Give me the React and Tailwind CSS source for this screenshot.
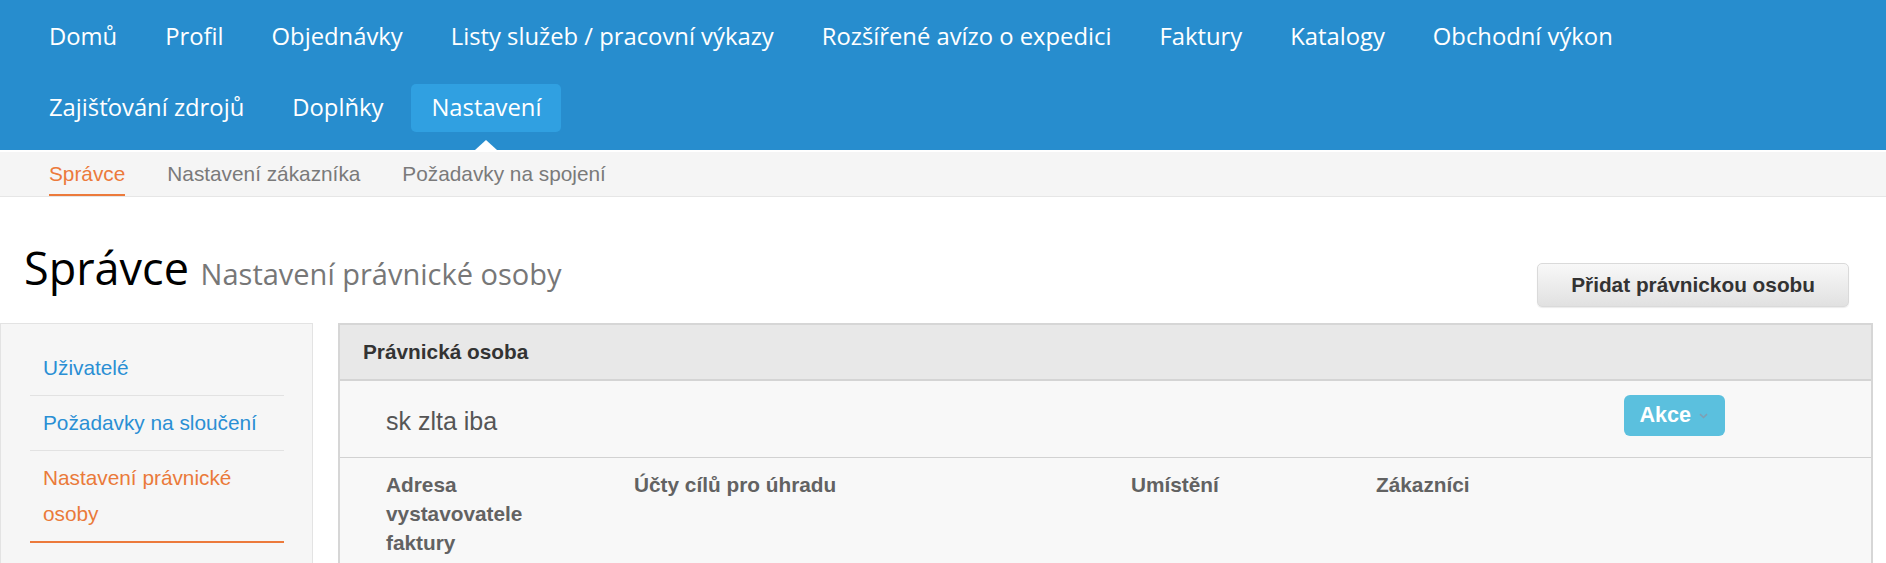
import React from "react";

const mainRow1 = [
  "Domů",
  "Profil",
  "Objednávky",
  "Listy služeb / pracovní výkazy",
  "Rozšířené avízo o expedici",
  "Faktury",
  "Katalogy",
  "Obchodní výkon",
];
const mainRow2 = ["Zajišťování zdrojů", "Doplňky", "Nastavení"];

const subTabs = ["Správce", "Nastavení zákazníka", "Požadavky na spojení"];

const sideLinks = [
  { label: "Uživatelé", active: false },
  { label: "Požadavky na sloučení", active: false },
  { label: "Nastavení právnické osoby", active: true },
];

function NavRow({ items, active }) {
  return (
    <ul className="flex gap-2">
      {items.map((item) => (
        <li key={item}>
          <a
            className={
              "relative h-[48px] px-5 flex items-center rounded-[5px] text-[23.8px] text-white whitespace-nowrap " +
              (item === active ? "bg-[#30a0e1]" : "")
            }
          >
            {item}
            {item === active && (
              <span className="absolute left-1/2 -translate-x-1/2 top-full mt-[8px] w-0 h-0 border-x-[11px] border-x-transparent border-b-[10px] border-b-white" />
            )}
          </a>
        </li>
      ))}
    </ul>
  );
}

function App() {
  return (
    <div className="min-h-screen bg-white font-['Liberation_Sans',Arial,sans-serif]">
      {/* main navigation */}
      <nav className="bg-[#278dce] pl-[29px] pt-[13px] pb-[18px] flex flex-col gap-[23px] border-b-2 border-white font-['Open_Sans',sans-serif]">
        <NavRow items={mainRow1} />
        <NavRow items={mainRow2} active="Nastavení" />
      </nav>

      {/* sub navigation */}
      <div className="h-[45px] bg-[#f5f5f5] border-b border-[#e6e6e6] flex pl-[49px] gap-[42px] text-[20.8px]">
        {subTabs.map((tab, i) => (
          <a
            key={tab}
            className={
              "h-full flex items-center border-y-2 border-transparent " +
              (i === 0 ? "border-b-[#ec7a3b] text-[#ec7a3b]" : "text-[#7a7a7a]")
            }
          >
            {tab}
          </a>
        ))}
      </div>

      {/* page header */}
      <div className="flex items-start justify-between pl-[24px] pr-[37px] pt-[41px]">
        <h1 className="font-['Open_Sans',sans-serif] text-[45px] leading-[59px] text-black font-normal">
          Správce{" "}
          <span className="text-[29px] text-[#777]">Nastavení právnické osoby</span>
        </h1>
        <button className="mt-[25px] h-[44px] px-[33px] rounded-[5px] border border-[#dadada] bg-linear-to-b from-[#f8f8f8] to-[#e1e1e1] font-bold text-[20.8px] text-[#333] shadow-[0_1px_1px_rgba(0,0,0,0.08)]">
          Přidat právnickou osobu
        </button>
      </div>

      {/* content */}
      <div className="flex items-start mt-[16px] pr-[13px]">
        {/* sidebar */}
        <aside className="w-[313px] shrink-0 bg-[#f6f6f6] border border-[#e3e3e3] pt-[17px] pb-[40px] pl-[29px] pr-[28px]">
          <ul>
            {sideLinks.map((link) => (
              <li
                key={link.label}
                className={
                  "py-[9px] pl-[13px] leading-[36px] text-[20.8px] " +
                  (link.active
                    ? "border-b-2 border-[#ec7a3b] text-[#ea7a3a]"
                    : "border-b border-[#e2e2e2] text-[#2a8fd4]")
                }
              >
                {link.label}
              </li>
            ))}
          </ul>
        </aside>

        {/* legal entity panel */}
        <section className="ml-[25px] flex-1 border-2 border-[#d6d6d6] bg-[#f8f8f8] min-h-[300px]">
          <div className="h-[56px] bg-[#e8e8e8] border-b-2 border-[#d4d4d4] flex items-center pl-[23px] font-bold text-[20.8px] text-[#333]">
            Právnická osoba
          </div>

          <div className="h-[77px] border-b border-[#d2d2d2] flex items-start justify-between pt-[14px] pl-[46px] pr-[146px]">
            <span className="mt-[6px] leading-[41px] text-[25px] text-[#555]">sk zlta iba</span>
            <button className="h-[41px] pl-[15px] pr-[17px] rounded-[6px] bg-[#5bc0de] text-white font-bold text-[21.6px] flex items-center gap-[8px]">
              Akce
              <svg width="9" height="6" viewBox="0 0 9 6" fill="none">
                <path d="M1 1.2L4.5 4.5L8 1.2" stroke="#7f9fb3" strokeWidth="1.6" />
              </svg>
            </button>
          </div>

          <div className="flex pt-[12px] pl-[23px] font-bold text-[20.8px] leading-[29px] text-[#626262]">
            <div className="w-[248px] pl-[23px] pr-[40px]">Adresa vystavovatele faktury</div>
            <div className="w-[497px] pl-[23px]">Účty cílů pro úhradu</div>
            <div className="w-[245px] pl-[23px]">Umístění</div>
            <div className="flex-1 pl-[23px]">Zákazníci</div>
          </div>
        </section>
      </div>
    </div>
  );
}

export default App;
